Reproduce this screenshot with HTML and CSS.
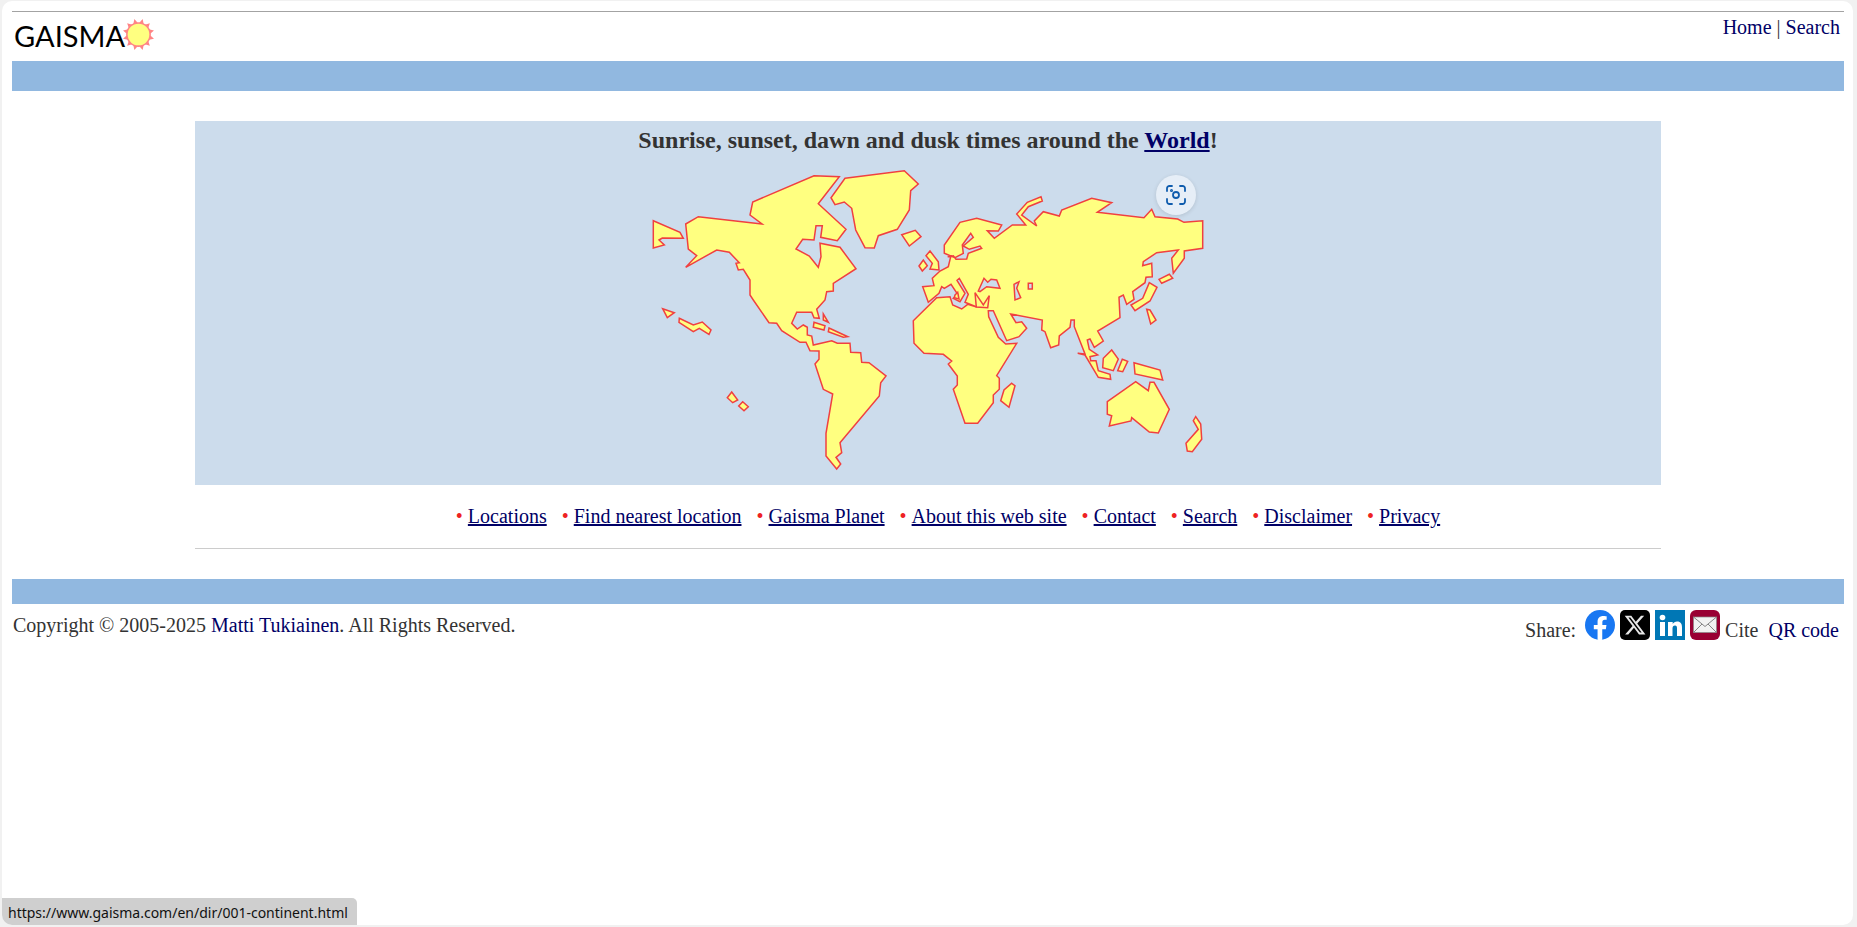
FILE: index.html
```html
<!DOCTYPE html>
<html lang="en">
<head>
  <meta charset="UTF-8" />
  <title>Gaisma</title>
  <link rel="stylesheet" href="styles.css">
</head>
<body>
  <div class="window">
    <div class="header">
      <a class="logo" href="#">
        <span class="logo-text">GAISMA</span>
        <svg class="sun" width="33" height="33" viewBox="0 0 32 32">
          <polygon fill="#ff8585" points="26.5,16 31,20 25.1,21.25 27,27 21.25,25.1 20,31 16,26.5 12,31 10.75,25.1 5,27 6.9,21.25 1,20 5.5,16 1,12 6.9,10.75 5,5 10.75,6.9 12,1 16,5.5 20,1 21.25,6.9 27,5 25.1,10.75 31,12" />
          <circle cx="16" cy="16" r="12" fill="#ff8585" />
          <circle cx="16" cy="16" r="10.5" fill="#ffff80" />
        </svg>
      </a>
      <div class="top-links"><a href="#">Home</a> | <a href="#">Search</a></div>
    </div>
    <div class="bar"></div>

    <div class="panel">
      <h1 class="title">Sunrise, sunset, dawn and dusk times around the <a href="#">World</a>!</h1>
      <svg class="map" width="580" height="325" viewBox="638 160 580 325">
        <g fill="#ffff80" stroke="#f04040" stroke-width="1.5" stroke-linejoin="miter">
          <!-- americas -->
          <polygon points="685.7,224 698.3,216.7 762,224 750,215 752.7,202 814,175.7 839.3,176.7 818.3,203.7 846,229.3 837.3,240.7 820.7,237.3 822.3,225.7 816,225.7 814,240 802.7,239.3 796,249 809.3,256 818.3,267.3 821,256.7 820,243.3 840,247.3 856,268.7 833.3,283.3 833.3,291 826.7,291.7 825,300 816.7,309.3 819.3,318.3 814,317.7 811.7,312.3 796.7,312.3 791.7,323.3 797.3,329 803.3,325 807.3,327.3 807.3,335 811.7,336 813.3,345 831.7,340.7 837.3,343.3 850,343.3 850.7,352.3 860.7,352.7 861.7,362.3 869,362.7 886,376 880.7,382.7 879.3,396 840,442.7 841.7,452.7 836,457.3 840.7,464 836.7,469 826,456 826,433.3 832.7,394 823.3,389.3 815,364 819,359.3 819,351 810,350.7 806,342.3 800,342.3 781.7,330.7 776.7,323.3 769,322.7 753.3,300 750,295 750,280 743.3,269.3 738.3,270 736,263.3 739.3,262.7 729.3,252.3 716.7,250 685.7,267.3 696.7,255.7 688.3,249" />
          <polygon points="845,178.3 904.3,170.7 918.3,184 910.7,190.7 909.3,210 897.3,229.3 878.3,235.7 874.3,248 865,247.7 855.7,230 851.7,208.3 844.3,202 835,204.7 831,197.7" />
          <polygon points="653.3,220.7 680,232.3 683.3,238.3 662.3,238 659,240 664.3,245 653.3,248" />
          <polygon points="901.7,234.7 915.3,230.3 921,236.7 909.3,246" />
          <polygon points="662.7,308.7 674.3,312.7 667.3,317.7" />
          <polygon points="679.3,318.3 693.3,325 702.3,322 711,330 709,334.3 699.3,328.3 693.3,331.7 679,322.3" />
          <polygon points="731.7,392 737.7,400 732.7,402.7 727.3,397.7" />
          <polygon points="742.7,401.7 748.3,406.7 744,410.7 738.7,406" />
          <polygon points="823.3,314 828.3,322.3 823.3,320" />
          <polygon points="814,322.3 825,325.7 824,330 813.3,327.3" />
          <polygon points="829,328 847.7,336.7 843.3,337.3 828.3,331.7" />
          <!-- eurasia and africa -->
          <polygon points="928.3,302.3 922.7,286.7 934,285.7 932.3,278.3 940,271 948.3,266.7 950.7,256.7 947.7,256.7 953.3,255.7 956,259.3 966.7,259 968.3,253.3 981.7,248.3 980,246 969.3,249.3 963.3,246 973.3,237.3 970.7,233.3 962.3,245 963.3,253.3 955,257.7 944.3,253.3 944.3,245 960,222.3 976.7,218.3 1001.7,225 998.3,231 987.3,230.7 994.3,238.3 1012.3,225 1025.7,225 1016.7,214 1027.3,202.3 1041,196.7 1042.3,201 1028.3,206.7 1021.7,215 1036.7,226 1034.3,221 1043.3,211.7 1059.3,216 1061.7,210 1091.7,198.3 1111.7,202.7 1097.3,212.3 1144,217.7 1151.7,209.3 1155,216.7 1177.7,219 1184,222.3 1202.7,220.7 1202.7,248.3 1184.3,251 1184.3,258.3 1173.3,273.3 1171.7,258.3 1178.3,250 1156.7,252.7 1143.3,261.7 1142.7,265.7 1151.7,263.3 1152.3,276.7 1146,277.3 1145,282.7 1132.7,291.7 1134,299.3 1126.7,304.3 1123.3,295 1119,297.3 1120,317.7 1097.7,331 1103.3,341 1094.3,347.3 1090,339 1087.3,340 1089.3,349.3 1097.7,355 1090,356.7 1090.7,360.7 1096,360.7 1098.3,370.7 1110,374.3 1110.7,379.3 1098.3,377.3 1085,355 1077.7,353.3 1085,354 1074.3,326.7 1074.3,320 1071,320 1070,327.3 1059.3,336 1058.7,345 1050.7,347.7 1045,331.7 1041.7,330 1042.3,320 1010.7,314 1016,322.7 1021.7,321.7 1026.7,328.3 1019,336.7 1006.7,340.7 993.3,310.7 988.3,310.7 988.7,316.7 998.3,337.3 1005.7,344 1016.7,343.3 996.7,375.7 999.3,378.3 999.3,389.3 993.3,395 993.3,402.7 977.7,423.3 965,423.3 953.3,389.3 957.3,385 957.3,376 948.3,364 951.7,361 943.3,354.3 924,353.3 914,343.3 913.3,320.7 936.7,297.7 950,296.7 952.7,305 961.7,309 967.7,304.3 976.7,307 965,302.3 968.3,294.3 959.3,278.3 957,280.3 965,293.3 960,301.7 953.3,298.3 957.7,294.3 951,284.3 944.3,288.3 941.7,286.7 939,293.3" />
          <polygon points="976.3,307 975,292.7 983.3,305 989.3,295.7 987.7,307.7" />
          <polygon points="955,295 957.7,292.3 959,299 954.3,297.7" />
          <!-- inland seas -->
          <polygon fill="#ccdcec" points="978.3,291 984,278.3 987.7,282.3 991,279.3 996.7,280 1000,288.3 986.7,286.7 980,291.7" />
          <polygon fill="#ccdcec" points="1014,284.3 1019,281.7 1016.7,288.3 1020.7,297.7 1015,300" />
          <polygon fill="#ccdcec" points="1028.3,283.3 1032.3,283.3 1032.3,289 1028.3,289" />
          <!-- islands -->
          <polygon points="926,255.7 930,251 938.3,261.7 939,270 930,269 932.3,263.3" />
          <polygon points="919,266 923.3,260 927.3,265.7 922.3,271" />
          <polygon points="1149.3,282.7 1157,287.3 1150,301 1135,310.7 1131,305 1142.7,298.3" />
          <polygon points="1159,279.3 1169.3,274.3 1172.7,278.3 1161.7,283.3" />
          <polygon points="1146.7,309.3 1150,310 1156,320 1150.7,324" />
          <polygon points="1111.7,350 1118.3,359 1113.3,370.7 1102.7,367.7 1103.3,358.3" />
          <polygon points="1122.3,359.3 1127.7,361.3 1122.7,371.7 1117.7,370.7" />
          <polygon points="1134,362.7 1160,370 1162.7,380 1135,374" />
          <polygon points="1107.3,401.7 1135.7,381.7 1148.3,390.7 1150,382.3 1154,382.3 1169.3,409.3 1158.3,433 1149.3,432 1131.7,417.7 1131,421 1109.3,426 1111.7,415.7 1107.3,414.3" />
          <polygon points="1195.7,416.7 1200.7,424 1201.7,439.3 1192.3,451.7 1187.3,451 1186,443.3 1198.3,429.3 1193.3,420.7" />
          <polygon points="1011.7,383.3 1015,385.7 1009,407.3 1000.7,400.7 1004,390" />
        </g>
      </svg>
      <div class="lens">
        <svg width="24" height="24" viewBox="0 0 24 24" fill="none" stroke="#0f5cad" stroke-width="1.8" stroke-linecap="round">
          <path d="M3 8V5.500A2.500 2.500 0 0 1 5.500 3H8" />
          <path d="M16 3h2.500A2.500 2.500 0 0 1 21 5.500V8" />
          <path d="M21 16v2.500a2.500 2.500 0 0 1-2.500 2.500H16" />
          <path d="M8 21H5.500A2.500 2.500 0 0 1 3 18.500V16" />
          <circle cx="12" cy="12" r="3" />
          <circle cx="7.500" cy="7.500" r=".6" />
        </svg>
      </div>
    </div>

    <div class="nav">
      <span class="nav-item"><a href="#">Locations</a></span>
      <span class="nav-item"><a href="#">Find nearest location</a></span>
      <span class="nav-item"><a href="#">Gaisma Planet</a></span>
      <span class="nav-item"><a href="#">About this web site</a></span>
      <span class="nav-item"><a href="#">Contact</a></span>
      <span class="nav-item"><a href="#">Search</a></span>
      <span class="nav-item"><a href="#">Disclaimer</a></span>
      <span class="nav-item"><a href="#">Privacy</a></span>
    </div>
    <div class="divider"></div>

    <div class="bar bar-small"></div>
    <div class="footer">
      <div class="copyright">Copyright © 2005-2025 <a href="#">Matti Tukiainen</a>. All Rights Reserved.</div>
      <div class="share">
        <span class="share-text share-label">Share:</span>
        <svg class="share-icon" width="30" height="30" viewBox="0 0 32 32">
          <circle cx="16" cy="16" r="16" fill="#1877f2" />
          <path fill="#fff" d="M22.2 20.600l.7-4.600h-4.400v-3c0-1.300.6-2.500 2.600-2.500h2V6.600s-1.800-.3-3.600-.3c-3.700 0-6.100 2.200-6.100 6.300V16H9.400v4.600h4v11.100a16 16 0 0 0 5 0V20.600z" />
        </svg>
        <svg class="share-icon" width="30" height="30" viewBox="0 0 30 30">
          <rect width="30" height="30" rx="5" fill="#000" />
          <g transform="translate(3.500 3.500) scale(.96)">
            <path fill="#e8e8e8" d="M18.244 2.250h3.308l-7.227 8.260 8.502 11.240H16.170l-5.214-6.817L4.990 21.750H1.680l7.730-8.835L1.254 2.250H8.080l4.713 6.231zm-1.161 17.520h1.833L7.084 4.126H5.117z" />
          </g>
        </svg>
        <svg class="share-icon" width="30" height="30" viewBox="0 0 30 30">
          <rect width="30" height="30" fill="#0077b5" />
          <circle cx="7.500" cy="7.500" r="2.800" fill="#fff" />
          <rect x="5" y="12" width="5" height="14" fill="#fff" />
          <path fill="#fff" d="M13 12h4.700v2c.8-1.400 2.400-2.400 4.400-2.400 3.700 0 4.900 2.400 4.900 6V26h-5v-7.400c0-1.800-.4-3-2-3-1.700 0-2.500 1.200-2.500 3V26H13z" />
        </svg>
        <svg class="share-icon" width="30" height="30" viewBox="0 0 30 30">
          <rect width="30" height="30" rx="6" fill="#990033" />
          <rect x="3.500" y="7" width="23" height="15.500" fill="#f2f2f2" stroke="#8a8a8a" stroke-width=".7" />
          <path fill="none" stroke="#777" stroke-width=".9" d="M3.500 7L15 16.500 26.500 7M3.500 22.500l8.500-8.500M26.500 22.500L18 14" />
        </svg>
        <span class="share-text">Cite</span>
        <a class="share-text qr" href="#">QR code</a>
      </div>
    </div>

    <div class="status">https://www.gaisma.com/en/dir/001-continent.html</div>
  </div>
</body>
</html>
```
FILE: styles.css
```css
html, body {
  height: 100%;
}
body {
  margin: 0;
  padding: 1px 4px 2px 2px;
  box-sizing: border-box;
  background: #f1f1f1;
  color: #333;
  font-family: "Liberation Serif", serif;
  font-size: 20px;
  overflow: hidden;
}
a {
  color: #000066;
}
.window {
  position: relative;
  height: 100%;
  padding: 10px 9px 0 10px;
  box-sizing: border-box;
  background: #fff;
  border-radius: 10px;
  overflow: hidden;
}
.header {
  display: flex;
  justify-content: space-between;
  height: 49px;
  border-top: 1px solid #a3a3a3;
}
.logo {
  display: flex;
  align-items: flex-start;
  padding: 6px 0 0 2px;
  color: #000;
  text-decoration: none;
}
.logo-text {
  font-family: Lato, sans-serif;
  font-size: 29px;
  line-height: 36px;
}
.sun {
  margin-left: -3px;
}
.top-links {
  padding: 4px 4px 0 0;
}
.top-links a {
  text-decoration: none;
}
.bar {
  height: 30px;
  background: #91b8e0;
}
.bar-small {
  height: 25px;
  margin-top: 30px;
}
.panel {
  position: relative;
  width: 80%;
  margin: 30px auto 0;
  background: #ccdcec;
  text-align: center;
}
.title {
  margin: 0;
  height: 39px;
  font-size: 24px;
  line-height: 38px;
}
.map {
  display: block;
  margin: 0 auto;
}
.lens {
  position: absolute;
  left: 961px;
  top: 54px;
  width: 40px;
  height: 40px;
  display: flex;
  align-items: center;
  justify-content: center;
  border-radius: 50%;
  background: #e6eef7;
  box-shadow: 0 1px 4px rgba(0, 0, 0, 0.12);
}
.nav {
  display: flex;
  justify-content: center;
  gap: 15px;
  width: 80%;
  margin: 0 auto;
  padding: 20px 0 0 40px;
  height: 44px;
  box-sizing: border-box;
}
.nav-item::before {
  content: "•";
  margin-right: 5px;
  color: #ee2222;
}
.divider {
  width: 80%;
  margin: 19px auto 0;
  height: 1px;
  background: #cccccc;
}
.footer {
  display: flex;
  justify-content: space-between;
}
.copyright {
  padding: 10px 0 0 1px;
}
.copyright a,
.qr {
  text-decoration: none;
}
.share {
  display: flex;
  align-items: flex-start;
  padding: 6px 5px 0 0;
}
.share-text {
  padding-top: 9px;
}
.share-label {
  margin-right: 9px;
}
.share-icon {
  margin-right: 5px;
}
.qr {
  margin-left: 10px;
}
.status {
  position: absolute;
  left: 0;
  bottom: 0;
  padding: 0 9px 0 6px;
  height: 27px;
  line-height: 29px;
  background: #cfcfcf;
  border-top-right-radius: 5px;
  color: #111;
  font-family: "Noto Sans", sans-serif;
  font-size: 14px;
}
```
